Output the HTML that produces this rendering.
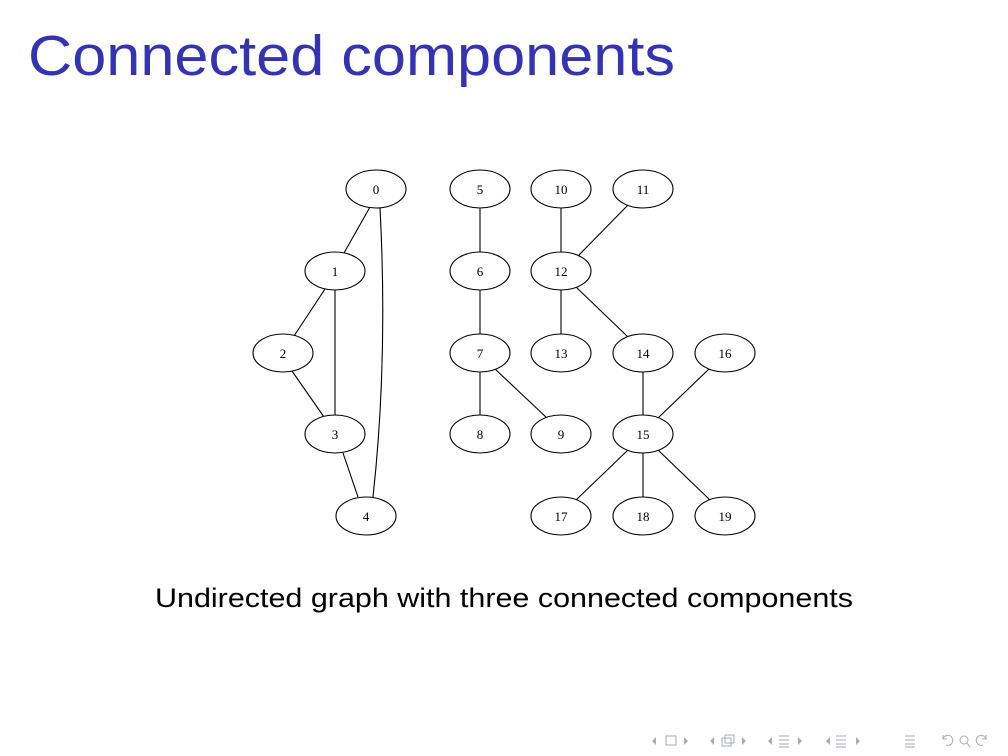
<!DOCTYPE html>
<html><head><meta charset="utf-8"><style>
html,body{margin:0;padding:0;background:#fff;}
svg{display:block;}
</style></head><body>
<svg width="1008" height="756" viewBox="0 0 1008 756" xmlns="http://www.w3.org/2000/svg">
<text x="28" y="75" font-family="Liberation Sans, sans-serif" font-size="57" fill="#3333b3" textLength="647" lengthAdjust="spacingAndGlyphs">Connected components</text>
<g stroke="#000" stroke-width="1.1" fill="none">
<line x1="370" y1="207" x2="344" y2="253"/>
<path d="M380 208 Q388 360 373 497"/>
<line x1="325" y1="289" x2="294" y2="336"/>
<line x1="335" y1="290" x2="335" y2="415"/>
<line x1="292" y1="371" x2="324" y2="417"/>
<line x1="343" y1="453" x2="358" y2="497"/>
<line x1="480" y1="208" x2="480" y2="252"/>
<line x1="480" y1="290" x2="480" y2="334"/>
<line x1="480" y1="372" x2="480" y2="415"/>
<line x1="495" y1="369" x2="547" y2="418"/>
<line x1="561" y1="208" x2="561" y2="252"/>
<line x1="628" y1="205" x2="578" y2="256"/>
<line x1="561" y1="290" x2="561" y2="334"/>
<line x1="576" y1="287" x2="628" y2="337"/>
<line x1="643" y1="372" x2="643" y2="415"/>
<line x1="709" y1="369" x2="658" y2="418"/>
<line x1="628" y1="450" x2="576" y2="500"/>
<line x1="643" y1="453" x2="643" y2="497"/>
<line x1="658" y1="450" x2="710" y2="500"/>
</g>
<g stroke="#000" stroke-width="1.1" fill="#fff">
<ellipse cx="376" cy="189" rx="30" ry="19"/><ellipse cx="480" cy="189" rx="30" ry="19"/>
<ellipse cx="561" cy="189" rx="30" ry="19"/><ellipse cx="643" cy="189" rx="30" ry="19"/>
<ellipse cx="335" cy="271" rx="30" ry="19"/><ellipse cx="480" cy="271" rx="30" ry="19"/>
<ellipse cx="561" cy="271" rx="30" ry="19"/>
<ellipse cx="283" cy="353" rx="30" ry="19"/><ellipse cx="480" cy="353" rx="30" ry="19"/>
<ellipse cx="561" cy="353" rx="30" ry="19"/><ellipse cx="643" cy="353" rx="30" ry="19"/>
<ellipse cx="725" cy="353" rx="30" ry="19"/>
<ellipse cx="335" cy="434" rx="30" ry="19"/><ellipse cx="480" cy="434" rx="30" ry="19"/>
<ellipse cx="561" cy="434" rx="30" ry="19"/><ellipse cx="643" cy="434" rx="30" ry="19"/>
<ellipse cx="366" cy="516" rx="30" ry="19"/><ellipse cx="561" cy="516" rx="30" ry="19"/>
<ellipse cx="643" cy="516" rx="30" ry="19"/><ellipse cx="725" cy="516" rx="30" ry="19"/>
</g>
<g font-family="Liberation Serif, serif" font-size="13" text-anchor="middle" fill="#000">
<text x="376" y="194">0</text><text x="480" y="194">5</text><text x="561" y="194">10</text><text x="643" y="194">11</text>
<text x="335" y="276">1</text><text x="480" y="276">6</text><text x="561" y="276">12</text>
<text x="283" y="358">2</text><text x="480" y="358">7</text><text x="561" y="358">13</text><text x="643" y="358">14</text><text x="725" y="358">16</text>
<text x="335" y="439">3</text><text x="480" y="439">8</text><text x="561" y="439">9</text><text x="643" y="439">15</text>
<text x="366" y="521">4</text><text x="561" y="521">17</text><text x="643" y="521">18</text><text x="725" y="521">19</text>
</g>
<text x="155" y="607" font-family="Liberation Sans, sans-serif" font-size="27" fill="#000" textLength="698" lengthAdjust="spacingAndGlyphs">Undirected graph with three connected components</text>
<g fill="#aab" stroke="#aab" stroke-width="1" font-family="DejaVu Sans, sans-serif" font-size="11">
<path d="M656 737 l-4 4 l4 4z" stroke="none"/>
<rect x="666" y="736" width="10" height="9" fill="none"/>
<path d="M684 737 l4 4 l-4 4z" stroke="none"/>
<path d="M714 737 l-4 4 l4 4z" stroke="none"/>
<rect x="722" y="738" width="9" height="8" fill="none"/><rect x="725" y="735" width="9" height="8" fill="none"/>
<path d="M742 737 l4 4 l-4 4z" stroke="none"/>
<path d="M772 737 l-4 4 l4 4z" stroke="none"/>
<path d="M779 736h10M779 740h10M779 744h10M779 747h10" fill="none"/>
<path d="M798 737 l4 4 l-4 4z" stroke="none"/>
<path d="M830 737 l-4 4 l4 4z" stroke="none"/>
<path d="M836 736h10M836 740h10M836 744h10M836 747h10" fill="none"/>
<path d="M856 737 l4 4 l-4 4z" stroke="none"/>
<path d="M905 736h10M905 740h10M905 744h10M905 747h10" fill="none"/>
<path d="M946 745 a5 5 0 1 0 -3 -6 M943 735 v4 h4" fill="none"/>
<circle cx="964" cy="740" r="4" fill="none"/><path d="M967 743 l3 4" fill="none"/>
<path d="M983 745 a5 5 0 1 1 3 -6 M986 735 v4 h-4" fill="none"/>
</g>
</svg>
</body></html>
